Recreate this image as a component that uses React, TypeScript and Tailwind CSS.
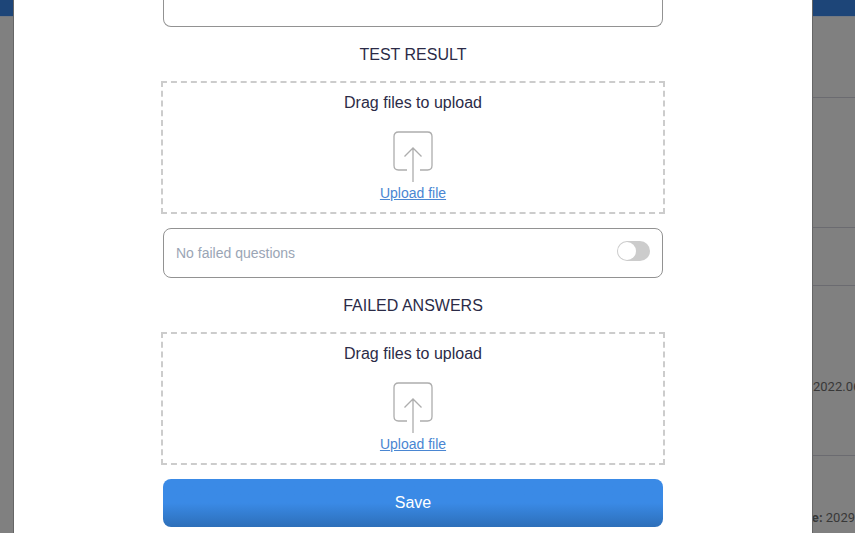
import { useId, useRef, useState } from "react";

function UploadIcon() {
  return (
    <svg
      width="40"
      height="51"
      viewBox="0 0 40 51"
      fill="none"
      stroke="#adadad"
      strokeWidth="1.3"
      aria-hidden="true"
    >
      <path d="M14 39H5.5Q1 39 1 34.500V5.500Q1 1 5.500 1H34.500Q39 1 39 5.500V34.500Q39 39 34.500 39H27" />
      <path d="M20 51V17.500M11.500 25.500L20 17L28.500 25.500" />
    </svg>
  );
}

function Dropzone({ title }: { title: string }) {
  const input = useRef<HTMLInputElement>(null);
  return (
    <section className="flex w-full flex-col items-center gap-3.5">
      <h2 className="text-base leading-6">{title}</h2>
      <div className="flex w-full flex-col items-center border-2 border-dashed border-[#cccccc] pt-2 pb-[9px]">
        <p className="mb-4 text-base leading-6">Drag files to upload</p>
        <UploadIcon />
        <input ref={input} type="file" aria-label={title} className="hidden" />
        <a
          href="#upload"
          className="mt-px text-sm leading-5 text-[#4a86d2] underline"
          onClick={(event) => {
            event.preventDefault();
            input.current?.click();
          }}
        >
          Upload file
        </a>
      </div>
    </section>
  );
}

function NoFailedToggle() {
  const id = useId();
  const [checked, setChecked] = useState(false);
  return (
    <div className="flex h-[50px] items-center justify-between rounded-lg border border-[#929292] px-3">
      <label htmlFor={id} className="text-sm leading-5 text-[#9aa5b5]">
        No failed questions
      </label>
      <input
        id={id}
        type="checkbox"
        role="switch"
        checked={checked}
        onChange={(event) => setChecked(event.target.checked)}
        className="mb-1 flex h-5 w-[33px] appearance-none items-center rounded-full bg-[#cccccc] px-px before:h-[18px] before:w-[18px] before:rounded-full before:bg-white before:content-[''] checked:justify-end checked:bg-[#3a8ae6]"
      />
    </div>
  );
}

export default function App() {
  return (
    <div className="flex h-screen overflow-hidden bg-[#808080] font-['Liberation_Sans',Arial,sans-serif] text-[#2b2b47]">
      <div className="w-[13px] shrink-0">
        <div className="h-[17px] border-b border-[#737982] bg-[#1d4578]" />
      </div>

      <main className="min-w-0 flex-1 border-x border-[#666666] bg-white">
        <form
          className="mx-auto flex w-full max-w-[504px] flex-col"
          onSubmit={(event) => event.preventDefault()}
        >
          <div className="px-0.5 pb-4">
            <textarea
              aria-label="Comment"
              className="block h-[27px] w-full resize-none rounded-b-lg border border-t-0 border-[#929292] px-3"
            />
          </div>
          <Dropzone title="TEST RESULT" />
          <div className="px-0.5 pt-3.5 pb-4">
            <NoFailedToggle />
          </div>
          <Dropzone title="FAILED ANSWERS" />
          <div className="px-0.5 pt-3.5">
            <button
              type="submit"
              className="h-12 w-full rounded-lg bg-linear-to-b from-[#3a8ae6] from-50% to-[#2d6fb9] text-base text-white"
            >
              Save
            </button>
          </div>
        </form>
      </main>

      <aside className="w-[42px] shrink-0 overflow-hidden font-[Roboto,'Open_Sans',sans-serif] text-[13px] whitespace-nowrap text-[#383838]">
        <div className="h-[17px] border-b border-[#737982] bg-[#1d4578]" />
        <div className="h-[81px] border-b border-[#6b6b70]" />
        <div className="h-[130px] border-b border-[#6b6b70]" />
        <div className="h-[58px] border-b border-[#6b6b70]" />
        <div className="flex h-[170px] items-center border-b border-[#6b6b70] pt-8">
          2022.06
        </div>
        <div className="flex h-[77px] items-end justify-end pb-1.5">
          <p>
            <b>e:</b> 2029
          </p>
        </div>
      </aside>
    </div>
  );
}
